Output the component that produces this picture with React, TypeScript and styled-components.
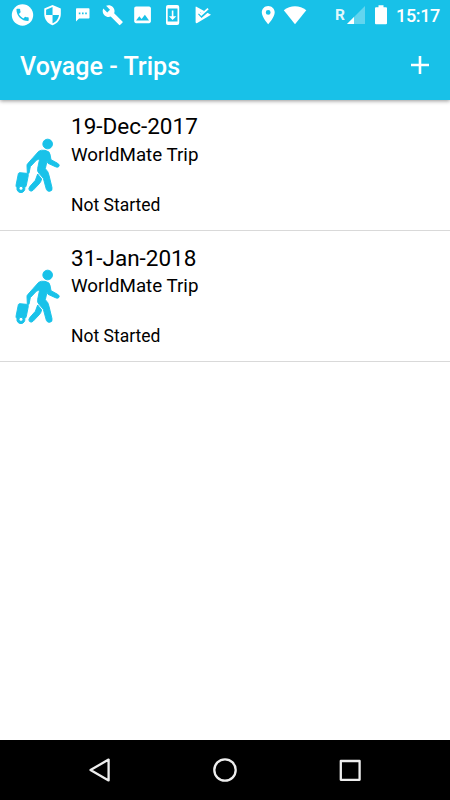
import React from "react";
import styled, { createGlobalStyle } from "styled-components";

const GlobalStyle = createGlobalStyle`
  * { box-sizing: border-box; }
  body { margin: 0; background: #fff; font-family: Roboto, "Liberation Sans", sans-serif; }
`;

const Screen = styled.main`
  display: flex;
  flex-direction: column;
  width: 450px;
  height: 800px;
  background: #fff;
  overflow: hidden;
`;

const Header = styled.header`
  flex: none;
  height: 100px;
  background: #18c1e8;
  color: #fff;
  box-shadow: 0 1px 4px rgba(0, 0, 0, 0.42);
`;

const StatusBar = styled.div`
  display: flex;
  align-items: center;
  justify-content: space-between;
  height: 30px;
  padding: 0 10px 0 7px;
`;

const StatusGroup = styled.div`
  display: flex;
  align-items: center;
  height: 30px;
`;

const Glyph = styled.svg<{ $width?: number }>`
  flex: none;
  display: block;
  width: ${({ $width = 30 }) => $width}px;
  height: 30px;
  fill: #fff;
`;

const Roaming = styled.span`
  width: 13px;
  font-size: 15.5px;
  font-weight: 700;
  line-height: 30px;
  color: rgba(255, 255, 255, 0.9);
`;

const Clock = styled.time`
  width: 44px;
  margin-top: 2px;
  font-size: 18px;
  font-weight: 500;
  letter-spacing: -0.35px;
  line-height: 30px;
  white-space: nowrap;
`;

const Toolbar = styled.div`
  display: flex;
  align-items: center;
  justify-content: space-between;
  height: 70px;
  padding: 0 20px;
`;

const Title = styled.h1`
  margin: 3px 0 0;
  font-size: 25.1px;
  font-weight: 500;
  line-height: 32px;
`;

const AddButton = styled.button`
  display: flex;
  width: 20px;
  height: 20px;
  padding: 0;
  border: 0;
  background: none;
`;

const TripList = styled.ul`
  flex: 1;
  margin: 0;
  padding: 0;
  list-style: none;
`;

const TripRow = styled.li`
  display: flex;
  height: 131.2px;
  padding: 0 14px;
  border-bottom: 1px solid #d9d9d9;
`;

const Traveller = styled.svg`
  flex: none;
  width: 48px;
  height: 56px;
  margin: 37px 9px 0 0;
  fill: #19c2e9;
  stroke: #19c2e9;
  stroke-width: 2.8;
`;

const TripText = styled.div`
  display: flex;
  flex-direction: column;
  padding-top: 12.4px;
  color: #000;
`;

const TripDate = styled.span`
  height: 29.8px;
  font-size: 22.5px;
  line-height: 28px;
`;

const TripName = styled.span`
  font-size: 18.75px;
  line-height: 27px;
`;

const TripStatus = styled.span`
  margin-top: 22.8px;
  font-size: 17.5px;
  line-height: 26px;
`;

const NavBar = styled.nav`
  flex: none;
  display: flex;
  align-items: center;
  justify-content: center;
  gap: 95px;
  height: 60px;
  background: #000;
`;

const NavIcon = styled.svg`
  width: 30px;
  height: 30px;
  fill: none;
  stroke: #eee;
  stroke-width: 2.3;
  stroke-linejoin: round;
`;

const NotificationIcons = () => (
  <StatusGroup>
    <Glyph viewBox="0 0 30 30">
      <circle cx="15.5" cy="15" r="10.7" />
      <path
        fill="#18c1e8"
        transform="translate(7.4 6.7) scale(.68)"
        d="M6.6 10.8c1.4 2.8 3.8 5.1 6.6 6.6l2.2-2.2c.3-.3.7-.4 1-.2 1.1.4 2.3.6 3.6.6.6 0 1 .4 1 1V20c0 .6-.4 1-1 1C10.6 21 3 13.4 3 4c0-.6.4-1 1-1h3.5c.6 0 1 .4 1 1 0 1.2.2 2.5.6 3.6.1.3 0 .7-.2 1z"
      />
    </Glyph>
    <Glyph viewBox="0 0 30 30">
      <path
        transform="translate(4.5 4) scale(.92)"
        d="M12 1 3 5v6c0 5.55 3.84 10.74 9 12 5.16-1.26 9-6.45 9-12V5zm0 10.99h7c-.53 4.12-3.28 7.79-7 8.94V12H5V6.3l7-3.11z"
      />
    </Glyph>
    <Glyph viewBox="0 0 30 30">
      <path d="M9.8 8.3H21.7Q22.5 8.3 22.5 9V17.7Q22.5 18.5 21.7 18.5H12L9 21.5V9Q9 8.3 9.8 8.3Z" />
      <path fill="#18c1e8" d="M11.8 12.6h1.6v1.6h-1.6zM15 12.6h1.6v1.6H15zM18.2 12.6h1.6v1.6h-1.6z" />
    </Glyph>
    <Glyph viewBox="0 0 30 30">
      <path
        transform="translate(4.8 4.2) scale(.91)"
        d="m22.7 19-9.1-9.1c.9-2.3.4-5-1.5-6.9-2-2-5-2.4-7.4-1.3L9 6 6 9 1.6 4.7C.4 7.1.9 10.1 2.9 12.1c1.9 1.9 4.6 2.4 6.9 1.5l9.1 9.1c.4.4 1 .4 1.4 0l2.3-2.3c.5-.4.5-1.1.1-1.4z"
      />
    </Glyph>
    <Glyph viewBox="0 0 30 30">
      <path
        transform="translate(4.4 3.7) scale(.93)"
        d="M21 19V5c0-1.1-.9-2-2-2H5c-1.1 0-2 .9-2 2v14c0 1.1.9 2 2 2h14c1.1 0 2-.9 2-2zM8.5 13.5l2.5 3.01L14.5 12l4.5 6H5z"
      />
    </Glyph>
    <Glyph viewBox="0 0 30 30">
      <rect x="9" y="5" width="13.2" height="20" rx="2" />
      <path fill="#18c1e8" d="M10.7 8.5h9.8v13h-9.8z" />
      <path d="M14.8 10.5h1.6v5.8h2.9L15.6 20l-3.7-3.7h2.9z" />
    </Glyph>
    <Glyph viewBox="0 0 30 30">
      <path d="M9.4 6.8 24 14.8 10.2 23Q9 23.5 8.6 22.3V7.2Q8.7 6.3 9.4 6.8Z" />
      <path d="m12.2 13.2 2.4 2.5 7-6" fill="none" stroke="#18c1e8" strokeWidth="3.2" />
      <path d="m11.9 12.1 2.4 2.5 6.8-6" fill="none" stroke="#fff" strokeWidth="1.9" />
    </Glyph>
  </StatusGroup>
);

const SystemIcons = () => (
  <StatusGroup>
    <Glyph $width={20} viewBox="258 0 20 30">
      <path
        fillRule="evenodd"
        d="M268.2 6C264.5 6 261.8 8.9 261.8 12.4C261.8 17 268.2 24.2 268.2 24.2S274.7 17 274.7 12.4C274.7 8.9 271.9 6 268.2 6ZM268.2 10A2.4 2.4 0 1 1 268.2 14.8A2.4 2.4 0 1 1 268.2 10Z"
      />
    </Glyph>
    <Glyph $width={57} viewBox="278 0 57 30">
      <path d="M283.8 10.2C290.3 4.9 299.7 4.9 306.3 10.2L295 24.2Z" />
    </Glyph>
    <Roaming>R</Roaming>
    <Glyph $width={22} viewBox="348 0 22 30" overflow="visible">
      <path fillOpacity=".32" d="M347 24 365 6V24Z" />
      <path d="M347 24 354 17V24Z" />
    </Glyph>
    <Glyph $width={26} viewBox="370 0 26 30">
      <path d="M378.5 5.2h5v2h2.5q1 0 1 1v15q0 1-1 1h-10q-1 0-1-1v-15q0-1 1-1h2.5z" />
    </Glyph>
    <Clock>15:17</Clock>
  </StatusGroup>
);

const TravellerIcon = () => (
  <Traveller viewBox="27 36 144 168" aria-hidden="true">
    <circle cx="128" cy="57" r="14.5" />
    <path d="M101 79Q108 74 120 76Q135 79 135 88L138 104L158 115Q166 120 161 125Q158 128 151 125L129 115L126 109L121 131Q130 139 132 151L141 188Q143 198 134 199Q127 200 124 193L115 160L102 145Q96 139 98 130L104 101L94 106L76 125L72 145H67L66 123Q65 119 69 115L84 98Z" />
    <path d="M98 147 110 162Q108 171 102 177L84 196Q78 201 73 196Q69 191 75 184L91 166Z" />
    <path
      fillRule="evenodd"
      d="M40 146Q41 143 45 143L65 145Q71 146 70 151L64 181Q63 187 59 187A12 12 0 1 1 36 188Q33 186 33 181ZM48 184A6 6 0 1 0 48 196A6 6 0 1 0 48 184Z"
    />
  </Traveller>
);

const trips = [
  { date: "19-Dec-2017", name: "WorldMate Trip", status: "Not Started" },
  { date: "31-Jan-2018", name: "WorldMate Trip", status: "Not Started" },
];

export default function App() {
  return (
    <>
      <GlobalStyle />
      <Screen>
        <Header>
          <StatusBar>
            <NotificationIcons />
            <SystemIcons />
          </StatusBar>
          <Toolbar>
            <Title>Voyage - Trips</Title>
            <AddButton aria-label="Add trip">
              <svg width="20" height="20" viewBox="0 0 20 20" stroke="#fff" strokeWidth="2.6">
                <path d="M10 1v18M1 10h18" />
              </svg>
            </AddButton>
          </Toolbar>
        </Header>
        <TripList>
          {trips.map((trip) => (
            <TripRow key={trip.date}>
              <TravellerIcon />
              <TripText>
                <TripDate>{trip.date}</TripDate>
                <TripName>{trip.name}</TripName>
                <TripStatus>{trip.status}</TripStatus>
              </TripText>
            </TripRow>
          ))}
        </TripList>
        <NavBar>
          <NavIcon viewBox="0 0 30 30">
            <path d="M5.5 15 23.6 4.6V25.4Z" />
          </NavIcon>
          <NavIcon viewBox="0 0 30 30">
            <circle cx="15" cy="15" r="10.7" />
          </NavIcon>
          <NavIcon viewBox="0 0 30 30">
            <rect x="5.8" y="6" width="18.8" height="18.8" />
          </NavIcon>
        </NavBar>
      </Screen>
    </>
  );
}
